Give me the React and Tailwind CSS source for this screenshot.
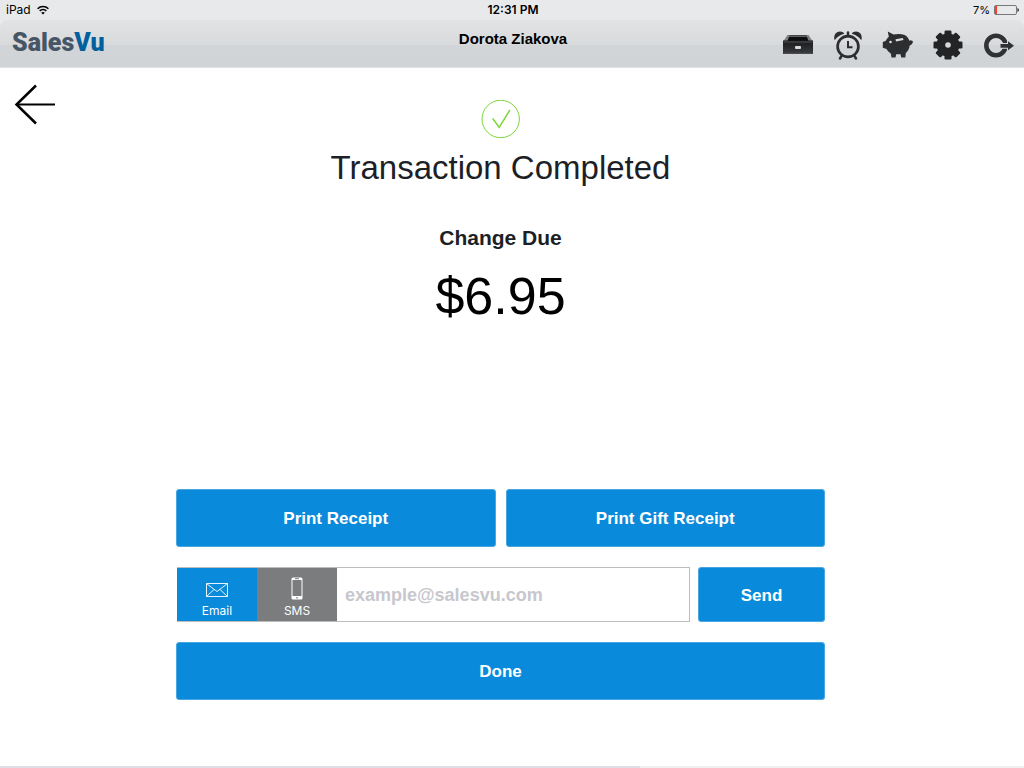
import React, { useState } from "react";

const actionButton =
  "rounded-[3px] border border-[#4aa6e0] bg-[#0a8ada] pt-0.5 text-[17px] font-bold text-white";

function WifiIcon() {
  return (
    <svg width="12" height="10" viewBox="0 0 12 10" fill="none" stroke="#000" strokeWidth="1.6" aria-hidden="true">
      <path d="M0.6 3.7C3.6 0.7 8.4 0.7 11.4 3.7" />
      <path d="M2.7 5.9C4.6 4.1 7.4 4.1 9.3 5.9" />
      <path d="M6 9.6L4.2 7.7C5.2 6.8 6.8 6.8 7.8 7.7Z" fill="#000" stroke="none" />
    </svg>
  );
}

function BatteryIcon() {
  return (
    <svg width="26" height="10" viewBox="0 0 26 10" aria-hidden="true">
      <rect x="0.5" y="0.5" width="22" height="9" rx="1.5" fill="none" stroke="#77787a" />
      <rect x="1" y="1" width="2" height="8" fill="#fc3d2f" />
      <path d="M23.5 3C25.3 3.6 25.3 6.4 23.5 7Z" fill="#111" />
    </svg>
  );
}

function DrawerIcon() {
  return (
    <svg width="32" height="32" viewBox="0 0 32 32" aria-hidden="true">
      <defs>
        <linearGradient id="drawerFront" x1="0" y1="0" x2="0" y2="1">
          <stop offset="0" stopColor="#18191b" />
          <stop offset="1" stopColor="#3a3c3f" />
        </linearGradient>
      </defs>
      <path d="M5.5 5H26.5L30.5 11H1.5Z" fill="#7d7f81" />
      <path d="M7.500 5.500H24.500L26.500 11H5.500Z" fill="#0c0d0e" />
      <path d="M7 6.500H25" stroke="#5f6163" strokeWidth="1" />
      <path d="M1 10.500H31V24H1Z" fill="url(#drawerFront)" />
      <path d="M1.500 12H30.500M1.500 23.300H30.500" stroke="#505255" strokeWidth="1" />
      <rect x="13" y="16" width="6" height="3" rx="1" fill="#d6d8da" />
    </svg>
  );
}

function AlarmIcon() {
  return (
    <svg width="32" height="32" viewBox="0 0 32 32" fill="none" stroke="#2c2d2f" aria-hidden="true">
      <circle cx="16" cy="16.500" r="10.400" strokeWidth="2.700" />
      <path d="M16 11V17.200H20.500" strokeWidth="2" />
      <path d="M16 2.500V6M9.500 26L8 28.500M22.500 26L24 28.500" strokeWidth="2.500" strokeLinecap="round" />
      <path d="M2.700 10.300C1 5.500 4 1.500 8 1.500C10 1.500 11.400 2.300 12.300 3.700C8 4.700 5 7 2.700 10.300Z" fill="#2c2d2f" stroke="none" />
      <path d="M29.300 10.300C31 5.500 28 1.500 24 1.500C22 1.500 20.600 2.300 19.700 3.700C24 4.700 27 7 29.300 10.300Z" fill="#2c2d2f" stroke="none" />
    </svg>
  );
}

function PiggyIcon() {
  return (
    <svg width="32" height="32" viewBox="0 0 32 32" fill="#2d2e30" aria-hidden="true">
      <path d="M5.800 1.500L11.500 4.600C14.500 3.800 19 3.500 22 4.800C25 6.100 26.500 8 27.300 10.800L28.500 10.200L30.800 11C31.100 13 30 14.700 27.700 15.500C27.300 18.500 26 21 23.800 23L23.300 27.500H19.300L18.500 24.300H14.200L13.500 27.500H9.500L8.800 23.500C7 22.300 5.500 20.800 4.500 19L0.800 17.800V12L3.800 10.800C4.500 9.300 5.300 8 6.800 6.700Z" />
      <circle cx="8.500" cy="12" r="1.300" fill="#dcdedf" />
      <path d="M13.500 9.300L20.800 7.900L21.500 9.900L14 11.500Z" fill="#dcdedf" />
    </svg>
  );
}

function GearIcon() {
  return (
    <svg width="32" height="32" viewBox="0 0 32 32" aria-hidden="true">
      <g fill="#232426">
        <rect x="12.500" y="0.500" width="7" height="29" rx="1.200" />
        <rect x="12.500" y="0.500" width="7" height="29" rx="1.200" transform="rotate(45 16 15)" />
        <rect x="12.500" y="0.500" width="7" height="29" rx="1.200" transform="rotate(90 16 15)" />
        <rect x="12.500" y="0.500" width="7" height="29" rx="1.200" transform="rotate(135 16 15)" />
        <circle cx="16" cy="15" r="11.500" />
      </g>
      <circle cx="16" cy="15" r="2.800" fill="#d5d8da" />
    </svg>
  );
}

function LogoutIcon() {
  return (
    <svg width="32" height="32" viewBox="0 0 32 32" aria-hidden="true">
      <circle cx="14" cy="15.500" r="9.700" fill="none" stroke="#303133" strokeWidth="4.500" />
      <path
        d="M18.500 14H26V11.300L32 15.800L26 20.300V17.700H18.500Z"
        fill="#303133"
        stroke="#d3d6d9"
        strokeWidth="2"
        paintOrder="stroke"
      />
    </svg>
  );
}

const tools = [
  ["Cash drawer", DrawerIcon],
  ["Time clock", AlarmIcon],
  ["Payouts", PiggyIcon],
  ["Settings", GearIcon],
  ["Log out", LogoutIcon],
];

function Header() {
  return (
    <header className="bg-[#e8e9eb]">
      <div className="grid h-5 grid-cols-3 items-center pr-1 pl-1.5 font-[Inter,sans-serif] text-xs leading-5 text-black">
        <div className="flex items-center gap-1.5">
          <span>iPad</span>
          <WifiIcon />
        </div>
        <div className="text-center font-semibold">12:31 PM</div>
        <div className="flex items-center justify-end gap-1">
          <span className="text-[11px]">7%</span>
          <BatteryIcon />
        </div>
      </div>
      <div className="grid h-12 grid-cols-3 rounded-t-lg border-b border-[#dfe3e6] bg-[linear-gradient(to_bottom,#e2e3e5,#d8dadc_52%,#d1d5d8_53%,#d0d4d7)] pr-2.5 pl-3">
        <a href="#home" className="self-center pb-0.5 font-[Roboto,sans-serif] text-[25px] leading-8 font-black text-[#475666]">
          Sales<span className="text-[#005f9e]">Vu</span>
        </a>
        <div className="pt-[9px] text-center text-[15px] leading-5 font-bold text-black">Dorota Ziakova</div>
        <nav className="flex items-center justify-end gap-[18px] pt-1">
          {tools.map(([label, Icon]) => (
            <button key={label} type="button" aria-label={label}>
              <Icon />
            </button>
          ))}
        </nav>
      </div>
    </header>
  );
}

export default function App() {
  const [mode, setMode] = useState("email");
  return (
    <div className="flex min-h-screen flex-col bg-white font-['Liberation_Sans',Arial,sans-serif] text-[#1d1f26]">
      <Header />
      <main className="grid grow grid-cols-[1fr_649px_1fr] items-start pr-[23px]">
        <button type="button" aria-label="Back" className="mt-4 ml-3.5 justify-self-start">
          <svg width="42" height="42" viewBox="0 0 42 42" fill="none" stroke="#000" aria-hidden="true">
            <path d="M22 1.500L2.500 20.500L22 39.500" strokeWidth="2.500" />
            <path d="M2 20.500H41" strokeWidth="2" />
          </svg>
        </button>
        <div className="flex flex-col pt-8">
          <section className="flex flex-col items-center">
            <svg width="40" height="40" viewBox="0 0 40 40" fill="none" stroke="#7ed63a" aria-hidden="true">
              <circle cx="19.700" cy="19" r="18.700" />
              <path d="M11.700 18.500L18.200 27.500L28.900 10" strokeWidth="1.500" />
            </svg>
            <h1 className="mt-2 text-[33px] leading-10">Transaction Completed</h1>
            <h2 className="mt-9 text-[21px] leading-7 font-bold">Change Due</h2>
            <p className="mt-3 text-[52px] leading-[64px] text-black">$6.95</p>
          </section>
          <form className="mt-[161px] flex flex-col gap-5" onSubmit={(e) => e.preventDefault()}>
            <div className="grid grid-cols-2 gap-2.5">
              <button type="button" className={`${actionButton} h-[58px]`}>Print Receipt</button>
              <button type="button" className={`${actionButton} h-[58px]`}>Print Gift Receipt</button>
            </div>
            <div className="flex h-[55px] gap-2 pl-px">
              <div className="flex grow border-y border-r border-[#bcbcbc]">
                <button
                  type="button"
                  aria-pressed={mode === "email"}
                  onClick={() => setMode("email")}
                  className="flex w-20 flex-col items-center justify-end bg-[#0a8ada] pb-0.5 font-[Inter,sans-serif] text-xs leading-4 text-white"
                >
                  <svg width="22" height="26" viewBox="0 0 22 26" fill="none" stroke="#fff" strokeWidth="0.900" aria-hidden="true">
                    <path d="M0.500 6.500H21.500V19.500H0.500ZM0.500 6.500L11 14.500L21.500 6.500M0.500 19.500L8 12.500M21.500 19.500L14 12.500" />
                  </svg>
                  Email
                </button>
                <button
                  type="button"
                  aria-pressed={mode === "sms"}
                  onClick={() => setMode("sms")}
                  className="flex w-20 flex-col items-center justify-end bg-[#7b7c7e] pb-0.5 font-[Inter,sans-serif] text-xs leading-4 text-white"
                >
                  <svg width="12" height="26" viewBox="0 0 12 26" aria-hidden="true">
                    <rect x="0.500" y="0.500" width="11" height="22" rx="1.500" fill="#fff" />
                    <rect x="1.500" y="3" width="9" height="16" fill="#7b7c7e" />
                    <path d="M4 1.700H8M5 20.800H7" stroke="#7b7c7e" />
                  </svg>
                  SMS
                </button>
                <input
                  type="email"
                  aria-label="Email address"
                  placeholder="example@salesvu.com"
                  className="min-w-0 grow bg-white px-2 text-lg font-bold outline-none placeholder:text-[#c7c7cd]"
                />
              </div>
              <button type="submit" className={`${actionButton} w-[127px]`}>Send</button>
            </div>
            <button type="button" className={`${actionButton} h-[58px]`}>Done</button>
          </form>
        </div>
      </main>
      <footer className="h-0.5 bg-[#f0f0f2]">
        <div className="h-full w-5/8 bg-[#dfe0e5]" />
      </footer>
    </div>
  );
}
